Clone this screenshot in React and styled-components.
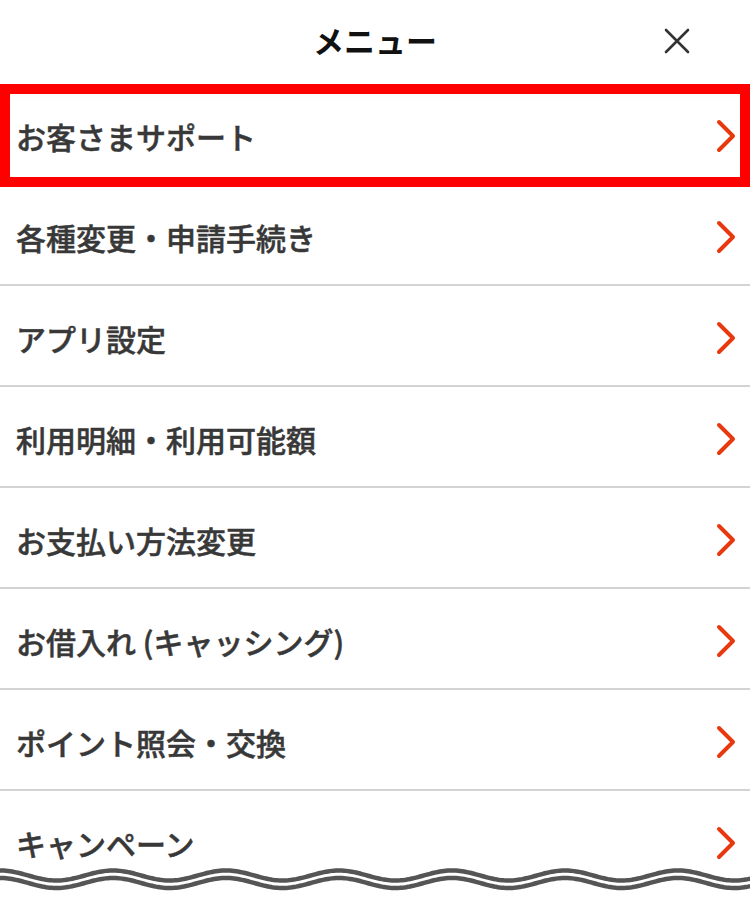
import React from "react";
import styled, { createGlobalStyle } from "styled-components";

const GlobalStyle = createGlobalStyle`
  html, body {
    margin: 0;
    padding: 0;
    background: #fff;
  }
  body {
    font-family: "Noto Sans CJK JP", "Noto Sans", sans-serif;
  }
`;

const ITEMS = [
  "お客さまサポート",
  "各種変更・申請手続き",
  "アプリ設定",
  "利用明細・利用可能額",
  "お支払い方法変更",
  "お借入れ (キャッシング)",
  "ポイント照会・交換",
  "キャンペーン",
];

const Screen = styled.div`
  position: relative;
  width: 750px;
  height: 905px;
  overflow: hidden;
  background: #fff;
`;

const Header = styled.header`
  position: relative;
  z-index: 2;
  height: 84px;
  display: flex;
  align-items: center;
  justify-content: center;
  background: #fff;
  box-shadow: 0 4px 14px rgba(0, 0, 0, 0.09);
`;

const Title = styled.h1`
  margin: 0 0 6px;
  font-size: 31px;
  font-weight: 700;
  color: #111;
`;

const CloseButton = styled.button`
  position: absolute;
  right: 58px;
  top: 26px;
  width: 30px;
  height: 30px;
  padding: 0;
  border: none;
  background: none;
  display: flex;
  align-items: center;
  justify-content: center;
`;

const List = styled.ul`
  list-style: none;
  margin: 0;
  padding: 0;
`;

const Row = styled.li`
  position: relative;
  height: 94px;
  box-sizing: content-box;
  border-bottom: 2px solid #d3d3d3;
  display: flex;
  align-items: center;
  justify-content: space-between;
  padding: 5px 12px 0 16px;
`;

const Label = styled.span`
  font-size: 30px;
  font-weight: 500;
  color: #383838;
  -webkit-text-stroke: 0.5px #383838;
  white-space: pre;
`;

const Highlight = styled.div`
  position: absolute;
  z-index: 3;
  inset: 0 0 -4px 0;
  border: 10px solid #ff0000;
  pointer-events: none;
`;

const Wave = styled.svg`
  position: absolute;
  left: 0;
  top: 860px;
  z-index: 4;
`;

const Chevron = () => (
  <svg width="24" height="34" viewBox="0 0 24 34">
    <path
      d="M5 3 L19 17 L5 31"
      fill="none"
      stroke="#e8380d"
      strokeWidth="4"
      strokeLinecap="round"
      strokeLinejoin="round"
    />
  </svg>
);

const wavePath = (center, amp, period) => {
  let d = "";
  for (let x = -4; x <= 754; x += 2) {
    const y = center - amp * Math.cos((2 * Math.PI * x) / period);
    d += `${x === -4 ? "M" : "L"}${x},${y.toFixed(2)} `;
  }
  return d;
};

export default function App() {
  const top = wavePath(15.5, 5, 113);
  const bottom = wavePath(23, 5, 113);
  return (
    <>
      <GlobalStyle />
      <Screen>
        <Header>
          <Title>メニュー</Title>
          <CloseButton aria-label="閉じる">
            <svg width="28" height="28" viewBox="0 0 28 28">
              <path
                d="M3 3 L25 25 M25 3 L3 25"
                stroke="#333"
                strokeWidth="2.6"
                strokeLinecap="round"
              />
            </svg>
          </CloseButton>
        </Header>
        <List>
          {ITEMS.map((item, i) => (
            <Row key={item}>
              <Label>{item}</Label>
              <Chevron />
              {i === 0 && <Highlight />}
            </Row>
          ))}
        </List>
        <Wave width="750" height="45" viewBox="0 0 750 45">
          <path d={`${bottom} L754,45 L-4,45 Z`} fill="#fff" />
          <path d={top} fill="none" stroke="#555" strokeWidth="4.5" />
          <path d={bottom} fill="none" stroke="#555" strokeWidth="4.5" />
        </Wave>
      </Screen>
    </>
  );
}
